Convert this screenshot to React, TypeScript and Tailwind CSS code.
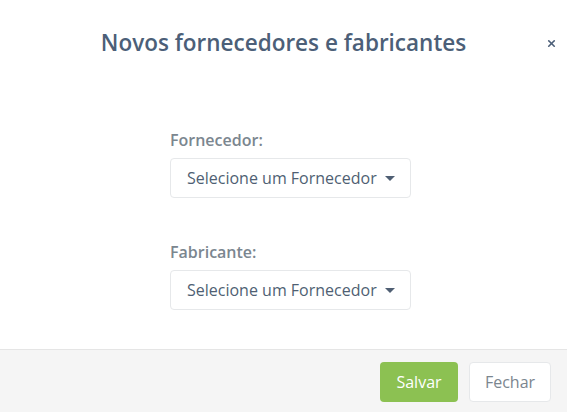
import { X } from "lucide-react";

function SelectBox({ label }: { label: string }) {
  return (
    <div className="flex flex-col">
      <label className="h-5 text-[16px] leading-5 font-semibold text-[#7b868f]">{label}</label>
      <button className="mt-2 flex h-10 w-[241px] items-center rounded border border-[#e6e8ea] bg-white pl-4 text-[16px] text-[#4f5f73]">
        <span>Selecione um Fornecedor</span>
        <span className="ml-2 mt-[1px] h-0 w-0 border-x-[5px] border-t-[5px] border-x-transparent border-t-[#4f5f73]" />
      </button>
    </div>
  );
}

export default function App() {
  return (
    <div className="flex h-[412px] w-[567px] flex-col bg-white" style={{ fontFamily: '"Open Sans", sans-serif' }}>
      <div className="relative flex h-[86px] items-center justify-center">
        <h2 className="text-[22.5px] font-semibold text-[#4c5f78]">Novos fornecedores e fabricantes</h2>
        <X size={11} strokeWidth={3.5} className="absolute right-[10px] top-[38px] text-[#4c5f78]" />
      </div>
      <div className="flex flex-1 flex-col gap-[44px] pl-[170px] pt-[44px]">
        <SelectBox label="Fornecedor:" />
        <SelectBox label="Fabricante:" />
      </div>
      <div className="flex h-[63px] justify-end gap-[11px] border-t border-[#e5e5e5] bg-[#f5f5f5] pr-4 pt-[12px]">
        <button className="h-10 w-[78px] rounded bg-[#8cc152] text-[16px] text-white">Salvar</button>
        <button className="h-10 w-[82px] rounded border border-[#e6e8ea] bg-white text-[16px] text-[#7b868f]">Fechar</button>
      </div>
    </div>
  );
}
